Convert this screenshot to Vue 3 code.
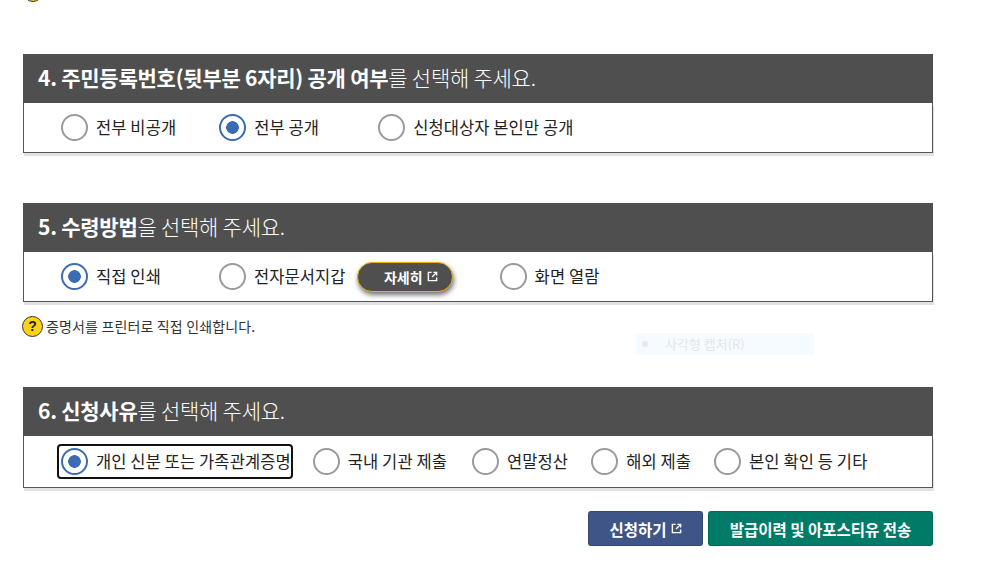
<script setup>
const sections = [
  {
    num: '4.',
    strong: '주민등록번호(뒷부분 6자리) 공개 여부',
    rest: '를 선택해 주세요.',
    gaps: 'opts-a',
    options: [
      { label: '전부 비공개' },
      { label: '전부 공개', checked: true },
      { label: '신청대상자 본인만 공개' },
    ],
  },
  {
    num: '5.',
    strong: '수령방법',
    rest: '을 선택해 주세요.',
    gaps: 'opts-b',
    help: '증명서를 프린터로 직접 인쇄합니다.',
    options: [
      { label: '직접 인쇄', checked: true },
      { label: '전자문서지갑', more: true },
      { label: '화면 열람' },
    ],
  },
  {
    num: '6.',
    strong: '신청사유',
    rest: '를 선택해 주세요.',
    gaps: 'opts-c',
    options: [
      { label: '개인 신분 또는 가족관계증명', checked: true, focus: true },
      { label: '국내 기관 제출' },
      { label: '연말정산' },
      { label: '해외 제출' },
      { label: '본인 확인 등 기타' },
    ],
  },
]
</script>

<template>
  <div class="page">
    <div class="top-clip"><span class="q-icon"></span></div>

    <section v-for="s in sections" :key="s.num" class="box" :class="'box-' + s.gaps">
      <h2 class="head"><b>{{ s.num }} {{ s.strong }}</b>{{ s.rest }}</h2>
      <div class="opts" :class="s.gaps">
        <template v-for="o in s.options" :key="o.label">
          <label class="opt" :class="{ focus: o.focus }">
            <span class="radio" :class="{ on: o.checked }"></span>
            <span class="txt">{{ o.label }}</span>
          </label>
          <a v-if="o.more" class="more">
            자세히
            <svg class="ext" viewBox="0 0 12 12"><path d="M5 1.5H1.5v9h9V7M7 1.5h3.5V5M10.5 1.5L5.5 6.5" fill="none" stroke="currentColor" stroke-width="1.5" /></svg>
          </a>
        </template>
      </div>
      <p v-if="s.help" class="help"><span class="q-icon">?</span>{{ s.help }}</p>
    </section>

    <div class="actions">
      <button class="btn blue">
        신청하기
        <svg class="ext" viewBox="0 0 12 12"><path d="M5 1.5H1.5v9h9V7M7 1.5h3.5V5M10.5 1.5L5.5 6.5" fill="none" stroke="currentColor" stroke-width="1.5" /></svg>
      </button>
      <button class="btn green">발급이력 및 아포스티유 전송</button>
    </div>

    <div class="ghost-menu"><i></i><span>사각형 캡처(R)</span></div>
  </div>
</template>

<style scoped>
.page {
  position: relative;
  width: 1004px;
  height: 569px;
  overflow: hidden;
  padding: 0 71px 0 23px;
  box-sizing: border-box;
  background: #fff;
  font-family: "Noto Sans CJK KR", "Noto Sans", sans-serif;
}

.top-clip {
  height: 2px;
  overflow: hidden;
  display: flex;
  align-items: flex-end;
  margin-bottom: 52px;
}

.q-icon {
  flex: none;
  display: inline-flex;
  align-items: center;
  justify-content: center;
  width: 18px;
  height: 18px;
  border: 1px solid #333;
  border-radius: 50%;
  background: #fcd116;
  color: #222;
  font: bold 14px "Liberation Sans", sans-serif;
}

.box {
  width: 910px;
  margin-bottom: 50px;
}

.box-opts-c {
  margin-bottom: 23px;
}

.head {
  margin: 0;
  height: 49px;
  padding-left: 15px;
  background: #4f4f4f;
  color: #fff;
  font-size: 21px;
  font-weight: 300;
  line-height: 47px;
  letter-spacing: -0.25px;
}

.head b {
  font-weight: 700;
}

.opts {
  display: flex;
  align-items: center;
  box-sizing: border-box;
  height: 50px;
  padding-left: 34px;
  border: 1px solid #555;
  border-top: 0;
  box-shadow: 1px 3px 0 #e2e2e2;
}

.opts-a .opt:nth-child(1) { margin-left: 3px; margin-right: 43px; }
.opts-a .opt:nth-child(2) { margin-right: 59px; }
.opts-b .opt:nth-child(1) { margin-left: 3px; margin-right: 58px; }
.opts-b .more { margin-left: 11px; margin-right: 47px; }
.opts-c { height: 52px; }
.opts-c .opt { margin-right: 24px; }
.opts-c .opt.focus { margin-left: -1px; margin-right: 20px; }
.opts-c .opt:nth-child(2) { margin-right: 25px; }
.opts-c .opt:nth-child(3) { margin-right: 23px; }
.opts-c .opt:nth-child(4) { margin-right: 23px; }

.opt {
  display: flex;
  align-items: center;
  gap: 8px;
  color: #222;
  font-size: 16.5px;
  letter-spacing: 0.1px;
}

.txt {
  margin-top: -2px;
}

.opt.focus {
  height: 35px;
  padding: 0 0 0 2px;
  border: 2px solid #111;
  border-radius: 4px;
  box-sizing: border-box;
}

.radio {
  flex: none;
  box-sizing: border-box;
  width: 27px;
  height: 27px;
  border: 2px solid #9a9a9a;
  border-radius: 50%;
  background: #fff;
}

.radio.on {
  border-color: #3a6cb4;
  background: radial-gradient(circle, #3a6cb4 0 6px, #fff 6.6px);
}

.more {
  display: inline-flex;
  align-items: center;
  justify-content: flex-end;
  gap: 4px;
  box-sizing: border-box;
  width: 96px;
  height: 30px;
  padding-right: 14px;
  border: 1px solid #e3b40b;
  border-radius: 15px;
  background: #4f4f4f;
  color: #fff;
  font-size: 14px;
  font-weight: 700;
  box-shadow: 1px 3px 5px rgba(0, 0, 0, 0.55);
}

.ext {
  width: 11px;
  height: 11px;
}

.help {
  display: flex;
  align-items: center;
  gap: 3px;
  margin: 13px 0 0 -1px;
  color: #333;
  font-size: 14px;
  line-height: 22px;
  letter-spacing: 0.15px;
}

.help .q-icon {
  width: 19px;
  height: 19px;
}

.actions {
  display: flex;
  justify-content: flex-end;
  gap: 5px;
  width: 910px;
}

.btn {
  display: inline-flex;
  align-items: center;
  justify-content: center;
  gap: 4px;
  height: 35px;
  border: 1px solid rgba(0, 0, 0, 0.15);
  border-radius: 3px;
  color: #fff;
  font-family: inherit;
  font-size: 15.5px;
  font-weight: 700;
}

.blue {
  width: 115px;
  background: #3f5587;
}

.green {
  width: 225px;
  background: #007b68;
}

.ghost-menu {
  position: absolute;
  left: 635px;
  top: 333px;
  display: flex;
  align-items: center;
  width: 179px;
  height: 22px;
  background: #f6fbff;
  color: #e6e6e6;
  font-size: 13px;
}

.ghost-menu span {
  margin-top: -2px;
}

.ghost-menu i {
  width: 6px;
  height: 6px;
  margin: 0 17px 0 7px;
  border-radius: 50%;
  background: #ece8ea;
}
</style>
